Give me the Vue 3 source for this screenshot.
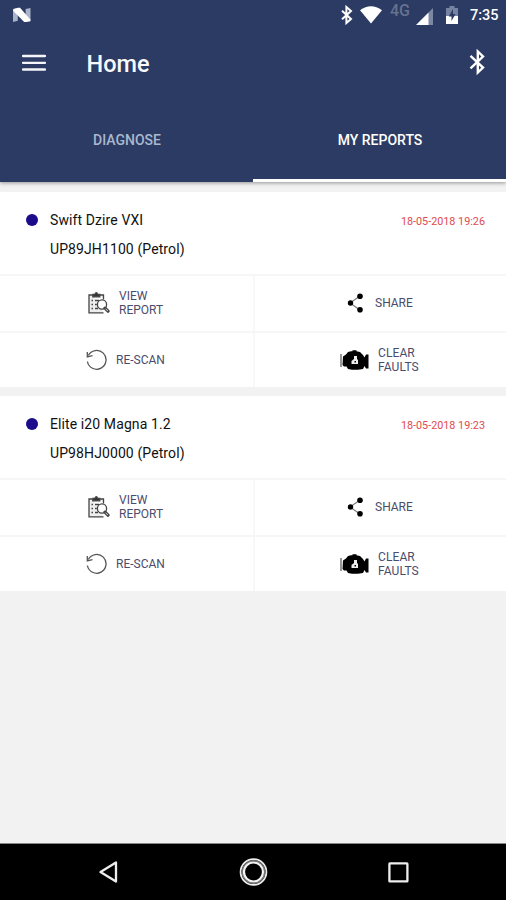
<script setup>
const reports = [
  { name: 'Swift Dzire VXI', plate: 'UP89JH1100 (Petrol)', date: '18-05-2018 19:26' },
  { name: 'Elite i20 Magna 1.2', plate: 'UP98HJ0000 (Petrol)', date: '18-05-2018 19:23' },
]
</script>

<template>
  <div class="screen">
    <header class="top">
      <div class="status">
        <svg class="n-logo" viewBox="0 0 20 16" width="20" height="16">
          <path d="M1 2.5 5.8 1v12.8L1 15zM13.6 2 18.5 1v13l-4.9 1z" fill="#a9b3ca" />
          <path d="M1.3 2 6 .8h2l10.3 11.7v1.7L13.6 15h-1.4L1.3 4z" fill="#fff" />
        </svg>
        <span class="grow"></span>
        <svg class="s-bt" viewBox="0 0 14 20" width="14" height="20">
          <path d="M2 5.8 11 14l-4.6 4V2L11 6l-9 8.2" fill="none" stroke="#fff" stroke-width="2" />
        </svg>
        <svg class="s-wifi" viewBox="0 0 22 18" width="22" height="18">
          <path d="M0 4.2Q11-3.8 22 4.2L11 17.6z" fill="#fff" />
        </svg>
        <span class="net">4G</span>
        <svg class="s-cell" viewBox="0 0 17 17" width="17" height="17">
          <path d="M17 0v17h-5V5z" fill="#7c87a5" />
          <path d="M12.5 4.500V17H0z" fill="#fff" />
        </svg>
        <svg class="s-bat" viewBox="0 0 12 18" width="12" height="18">
          <path d="M0 2h3.500V0h5v2H12v8H0z" fill="#7683a2" />
          <path d="M0 10h12v8H0z" fill="#fff" />
          <path d="M7 3 2.800 10.500h2.700V15l4-7H7z" fill="#2c3b63" />
        </svg>
        <span class="clock">7:35</span>
      </div>
      <div class="bar">
        <svg viewBox="0 0 24 17" width="24" height="17">
          <path d="M1 2h22M1 8.800h22M1 15.500h22" stroke="#f5f6fa" stroke-width="2.300" stroke-linecap="round" />
        </svg>
        <h1>Home</h1>
        <svg viewBox="0 0 18 26" width="18" height="26">
          <path d="M2.500 6.800 15 18.600 9.800 23.500v-21l5.200 5L2.500 19.300" fill="none" stroke="#fff" stroke-width="2.400" />
        </svg>
      </div>
      <nav class="tabs">
        <div class="tab"><span class="diag">DIAGNOSE</span></div>
        <div class="tab active"><span class="mine">MY REPORTS</span></div>
      </nav>
    </header>

    <main>
      <article v-for="r in reports" :key="r.plate" class="card">
        <div class="head">
          <i class="dot"></i>
          <div class="car">
            <div class="name">{{ r.name }}</div>
            <div class="plate">{{ r.plate }}</div>
          </div>
          <time>{{ r.date }}</time>
        </div>
        <div class="row">
          <div class="cell view">
            <svg viewBox="0 0 22 22" width="22" height="22" fill="none" stroke="#444" stroke-width="1.300">
              <path d="M4.500 3H1v17.800h14.500M12 3h3.500v4.500" fill="#eee" />
              <path d="M4.800 4.800V2.500h2Q8.300-1 9.800 2.500h2v2.300z" fill="#333" />
              <path d="M3.500 8.500h1.500M7 8.500h4M3.500 12.500h1.500M7 12.500h1.800M3.500 16.500h1.500M7 16.500h3" />
              <circle cx="14" cy="12.500" r="4.600" fill="#fff" />
              <path d="m17 16.200 3 3" stroke-width="3.200" stroke-linecap="round" />
              <path d="m17.500 16.700 2.300 2.300" stroke="#ddd" stroke-width="1" />
            </svg>
            <span>VIEW<br />REPORT</span>
          </div>
          <div class="cell share">
            <svg viewBox="0 0 16 20" width="16" height="20">
              <path d="M13 3 3 10l10 7" fill="none" stroke="#777" stroke-width="1.100" />
              <circle cx="13" cy="3.200" r="2.800" /><circle cx="3.500" cy="10" r="2.700" /><circle cx="13" cy="16.800" r="2.800" />
            </svg>
            <span>SHARE</span>
          </div>
        </div>
        <div class="row">
          <div class="cell scan">
            <svg viewBox="0 0 22 22" width="22" height="22" fill="none" stroke="#555" stroke-width="1.300">
              <path d="M2.300 6.500A9.400 9.400 0 1 1 1.400 12.500" />
              <path d="M1.300 3v5l5.200-1.300" />
            </svg>
            <span>RE-SCAN</span>
          </div>
          <div class="cell clear">
            <svg viewBox="0 0 29 20" width="29" height="20">
              <path d="M3 6.500 6 4.500 8 2l3-.8h1.500V.3h4v.9L20 2l3 3 1.500 2.500 1.500-3h2.500v14H26l-1.500-2.500L23 19l-5 .8h-6L8 19l-1.500-2.500H4L2.500 15z" />
              <path d="M1 4v13" stroke="#555" stroke-width="1.200" />
              <path d="M14 6h3v3l1 1v4h-6.500v-3L14 9z" fill="#eee" />
              <path d="M14.500 11h1.500v1.500h-1.500z" />
            </svg>
            <span>CLEAR<br />FAULTS</span>
          </div>
        </div>
      </article>
    </main>

    <footer>
      <svg viewBox="0 0 20 24" width="20" height="24">
        <path d="M18 2.500v19L2.500 12z" fill="none" stroke="#eee" stroke-width="2.300" stroke-linejoin="round" />
      </svg>
      <svg viewBox="0 0 30 30" width="30" height="30" fill="none">
        <circle cx="15.500" cy="15" r="12.900" stroke="#eee" stroke-width="1.800" />
        <circle cx="15.500" cy="15" r="11.200" stroke="#777" stroke-width="1.500" />
        <circle cx="15.500" cy="15" r="9.500" stroke="#f5f5f5" stroke-width="2.200" />
      </svg>
      <svg viewBox="0 0 21 21" width="21" height="21">
        <rect x="1.400" y="1.400" width="18" height="18" rx=".5" fill="none" stroke="#eee" stroke-width="2.300" />
      </svg>
    </footer>
  </div>
</template>

<style>
body { margin: 0; }
</style>

<style scoped>
* { box-sizing: border-box; }
svg { display: block; flex: none; }
.screen {
  width: 506px; height: 900px; display: flex; flex-direction: column;
  background: #f2f2f2; font-family: Roboto, sans-serif; overflow: hidden;
}
.top {
  height: 182px; flex: none; display: flex; flex-direction: column;
  background: #2c3b63; box-shadow: 0 1px 4px rgba(0, 0, 0, .4);
}
.status { height: 30px; display: flex; align-items: center; padding: 0 8px 0 12px; color: #fff; }
.grow { flex: 1; }
.s-bt { margin-right: 6px; }
.s-wifi { margin-right: 8px; margin-top: -1px; }
.net { width: 26px; font-size: 16px; font-weight: 500; line-height: 20px; margin-top: -8px; color: #66728f; }
.s-cell { margin-top: 2px; margin-right: 13px; }
.s-bat { margin-right: 12px; }
.clock { width: 28px; font-size: 14.500px; font-weight: 500; line-height: 20px; margin-top: 1px; white-space: nowrap; }
.bar { height: 68px; display: flex; align-items: center; padding: 0 20px 4px 22px; }
h1 { margin: 3px auto 0 40.500px; color: #f8f9fc; font-size: 23.500px; line-height: 28px; font-weight: 500; }
.tabs { flex: 1; display: flex; }
.tab {
  flex: 1; display: flex; align-items: center; justify-content: center;
  border-bottom: 3px solid transparent; padding-top: 2px;
  font-size: 14px; line-height: 16px; font-weight: 500; color: #a9b8cf;
}
.tab.active { color: #fff; border-bottom-color: #fff; }
.diag { padding-left: 1px; }
.mine { padding-left: 1px; }
main { flex: 1; padding-top: 10px; display: flex; flex-direction: column; gap: 9px; }
.card { height: 195px; background: #fff; }
.head { height: 82px; display: flex; align-items: flex-start; padding: 18px 21px 0 26px; }
.dot { width: 12px; height: 12px; border-radius: 50%; background: #1c0b8b; margin: 4px 12px 0 0; }
.car { flex: 1; color: #111; font-size: 14px; line-height: 20px; letter-spacing: .1px; }
.plate { margin-top: 9px; }
time { font-size: 10.800px; line-height: 14px; margin-top: 5px; color: #e04a4e; }
.row { height: 56.500px; display: flex; border-top: 2px solid #f6f6f6; }
.cell {
  width: 253px; display: flex; align-items: center;
  color: #4a4c6c; font-size: 12px; line-height: 14px;
}
.cell + .cell { border-left: 2px solid #f8f8f8; }
.view { padding-left: 88px; gap: 9px; }
.share { padding-left: 92px; gap: 12px; }
.scan { padding-left: 86px; gap: 8px; }
.clear { padding-left: 85px; gap: 9px; letter-spacing: .1px; }
footer {
  height: 57px; flex: none; display: flex; align-items: center;
  background: #000; border-top: 1px solid #888; padding-left: 98px;
}
footer svg + svg { margin-left: 120px; }
</style>
